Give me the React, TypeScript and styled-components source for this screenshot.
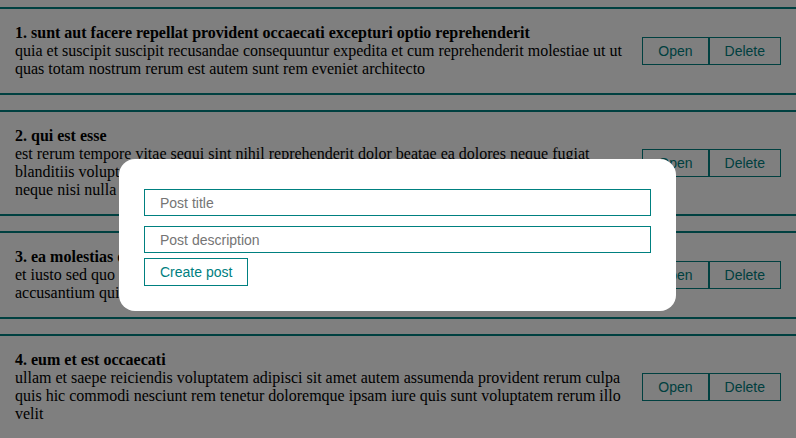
import React from "react";
import styled, { createGlobalStyle } from "styled-components";

const GlobalStyle = createGlobalStyle`
  * { box-sizing: border-box; margin: 0; padding: 0; }
  html, body { overflow: hidden; background: #ffffff; }
  body {
    font-family: "Liberation Serif", "Times New Roman", serif;
    font-size: 16px;
    line-height: 18px;
    color: #000;
  }
`;

const Page = styled.div`
  width: 800px;
  margin: 0 -2px;
`;

const Post = styled.div`
  display: flex;
  justify-content: space-between;
  align-items: center;
  padding: 15px;
  border: 2px solid teal;
  margin-top: 15px;
  &:first-child { margin-top: 7px; }
`;

const PostContent = styled.div`
  flex: 1;
  min-width: 0;
`;

const Title = styled.strong`
  display: block;
  font-weight: bold;
`;

const Body = styled.div``;

const Btns = styled.div`
  display: flex;
  flex-shrink: 0;
`;

const MyButton = styled.button`
  padding: 5px 15px;
  color: teal;
  font-family: "Liberation Sans", Arial, sans-serif;
  font-size: 14px;
  line-height: 16px;
  background: transparent;
  border: 1px solid teal;
  cursor: pointer;
`;

const Overlay = styled.div`
  position: fixed;
  inset: 0;
  background: rgba(0, 0, 0, 0.5);
  display: flex;
  justify-content: center;
  align-items: center;
  padding: 32px 1px 0 0;
`;

const ModalContent = styled.div`
  width: 557px;
  padding: 25px;
  background: #ffffff;
  border-radius: 16px;
`;

const Form = styled.form`
  display: flex;
  flex-direction: column;
  align-items: flex-start;
`;

const MyInput = styled.input`
  width: 100%;
  height: 27px;
  padding: 5px 15px;
  margin: 5px 0;
  border: 1px solid teal;
  font-family: "Liberation Sans", Arial, sans-serif;
  font-size: 14px;
  outline: none;
  &::placeholder { color: #757575; }
`;

const posts = [
  {
    id: 1,
    title: "sunt aut facere repellat provident occaecati excepturi optio reprehenderit",
    body: "quia et suscipit suscipit recusandae consequuntur expedita et cum reprehenderit molestiae ut ut quas totam nostrum rerum est autem sunt rem eveniet architecto",
  },
  {
    id: 2,
    title: "qui est esse",
    body: "est rerum tempore vitae sequi sint nihil reprehenderit dolor beatae ea dolores neque fugiat blanditiis voluptate porro vel nihil molestiae ut reiciendis qui aperiam non debitis possimus qui neque nisi nulla",
  },
  {
    id: 3,
    title: "ea molestias quasi exercitationem repellat qui ipsa sit aut",
    body: "et iusto sed quo iure voluptatem occaecati omnis eligendi aut ad voluptatem doloribus vel accusantium quis pariatur molestiae porro eius odio et labore et velit aut",
  },
  {
    id: 4,
    title: "eum et est occaecati",
    body: "ullam et saepe reiciendis voluptatem adipisci sit amet autem assumenda provident rerum culpa quis hic commodi nesciunt rem tenetur doloremque ipsam iure quis sunt voluptatem rerum illo velit",
  },
];

export default function App() {
  return (
    <>
      <GlobalStyle />
      <Page>
        {posts.map((p) => (
          <Post key={p.id}>
            <PostContent>
              <Title>
                {p.id}. {p.title}
              </Title>
              <Body>{p.body}</Body>
            </PostContent>
            <Btns>
              <MyButton>Open</MyButton>
              <MyButton>Delete</MyButton>
            </Btns>
          </Post>
        ))}
      </Page>
      <Overlay>
        <ModalContent>
          <Form onSubmit={(e) => e.preventDefault()}>
            <MyInput type="text" placeholder="Post title" />
            <MyInput type="text" placeholder="Post description" />
            <MyButton type="submit">Create post</MyButton>
          </Form>
        </ModalContent>
      </Overlay>
    </>
  );
}
